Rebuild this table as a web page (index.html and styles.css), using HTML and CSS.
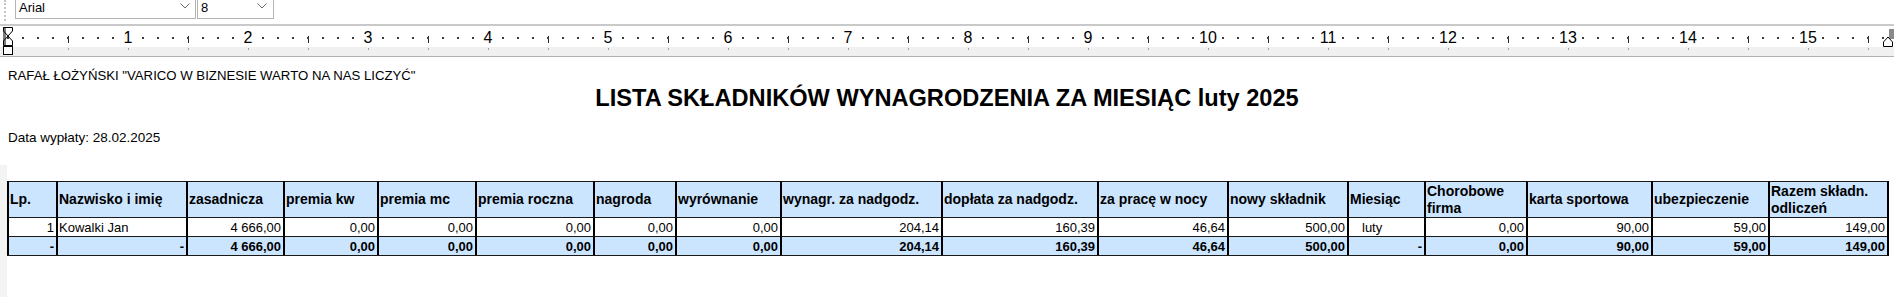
FILE: index.html
```html
<!DOCTYPE html>
<html lang="pl">
<head>
<meta charset="utf-8">
<title>Lista składników wynagrodzenia</title>
<link rel="stylesheet" href="styles.css">
</head>
<body>
<div class="toolbar">
  <div class="grip"></div>
  <div class="combo combo-font"><span>Arial</span><svg class="chev" viewBox="0 0 10 6"><polyline points="0.5,0.5 5,5 9.5,0.5"/></svg></div>
  <div class="combo combo-size"><span>8</span><svg class="chev" viewBox="0 0 10 6"><polyline points="0.5,0.5 5,5 9.5,0.5"/></svg></div>
</div>
<div class="ruler">
  <svg class="indent-left" width="12" height="30" viewBox="0 0 12 30">
    <rect x="1" y="1" width="3" height="18" fill="#7c7c7c"/>
    <path d="M1.5 1.5 H10.5 V5 L6 10 L1.5 5 Z" fill="none" stroke="#000"/>
    <path d="M6 10 L10.5 15 V19.5 H1.5 V15 Z" fill="none" stroke="#000"/>
    <rect x="1.5" y="20.5" width="9" height="8" fill="#fff" stroke="#000"/>
  </svg>
  <div class="ruler-nums">
    <span><i>1</i></span><span><i>2</i></span><span><i>3</i></span><span><i>4</i></span><span><i>5</i></span><span><i>6</i></span><span><i>7</i></span><span><i>8</i></span><span><i>9</i></span><span><i>10</i></span><span><i>11</i></span><span><i>12</i></span><span><i>13</i></span><span><i>14</i></span><span><i>15</i></span>
  </div>
  <svg class="indent-right" width="12" height="30" viewBox="0 0 12 30">
    <rect x="7" y="3" width="5" height="10" fill="#8a8a8a"/>
    <path d="M1.5 20.5 V16 L6 11 L10.5 16 V20.5 Z" fill="#fff" stroke="#000"/>
  </svg>
</div>
<div class="page">
  <p class="company">RAFAŁ ŁOŻYŃSKI "VARICO W BIZNESIE WARTO NA NAS LICZYĆ"</p>
  <h1 class="title">LISTA SKŁADNIKÓW WYNAGRODZENIA ZA MIESIĄC luty 2025</h1>
  <p class="paydate">Data wypłaty: 28.02.2025</p>
  <div class="table-wrap">
    <table class="payroll">
      <colgroup>
        <col style="width:49px"><col style="width:130px"><col style="width:97px"><col style="width:94px"><col style="width:98px"><col style="width:118px"><col style="width:82px"><col style="width:105px"><col style="width:161px"><col style="width:156px"><col style="width:130px"><col style="width:120px"><col style="width:77px"><col style="width:102px"><col style="width:125px"><col style="width:117px"><col style="width:119px">
      </colgroup>
      <thead>
        <tr>
          <th>Lp.</th><th>Nazwisko i imię</th><th>zasadnicza</th><th>premia kw</th><th>premia mc</th><th>premia roczna</th><th>nagroda</th><th>wyrównanie</th><th>wynagr. za nadgodz.</th><th>dopłata za nadgodz.</th><th>za pracę w nocy</th><th>nowy składnik</th><th>Miesiąc</th><th>Chorobowe firma</th><th>karta sportowa</th><th>ubezpieczenie</th><th>Razem składn. odliczeń</th>
        </tr>
      </thead>
      <tbody>
        <tr>
          <td>1</td><td class="name">Kowalki Jan</td><td>4&nbsp;666,00</td><td>0,00</td><td>0,00</td><td>0,00</td><td>0,00</td><td>0,00</td><td>204,14</td><td>160,39</td><td>46,64</td><td>500,00</td><td class="month">luty</td><td>0,00</td><td>90,00</td><td>59,00</td><td>149,00</td>
        </tr>
        <tr class="total">
          <td>-</td><td>-</td><td>4&nbsp;666,00</td><td>0,00</td><td>0,00</td><td>0,00</td><td>0,00</td><td>0,00</td><td>204,14</td><td>160,39</td><td>46,64</td><td>500,00</td><td>-</td><td>0,00</td><td>90,00</td><td>59,00</td><td>149,00</td>
        </tr>
      </tbody>
    </table>
  </div>
</div>
</body>
</html>
```
FILE: styles.css
```css
* { box-sizing: border-box; }
html, body { margin: 0; padding: 0; background: #fff; }
body {
  width: 1894px;
  height: 297px;
  overflow: hidden;
  font-family: "Liberation Sans", Arial, sans-serif;
  color: #000;
}

/* toolbar */
.toolbar {
  height: 26px;
  border-bottom: 2px solid #c9c9c9;
  display: flex;
  align-items: flex-start;
}
.grip {
  width: 2px;
  height: 21px;
  margin-left: 4px;
  border-left: 2px dotted #c4c4c4;
}
.combo {
  height: 24px;
  margin-top: -5px;
  border: 1px solid #b4b4b4;
  background: #fff;
  display: flex;
  align-items: center;
  justify-content: space-between;
  padding: 0 5px 0 3px;
  font-size: 13px;
  line-height: 15px;
}
.combo-font { margin-left: 9px; width: 181px; }
.combo-size { margin-left: 1px; width: 77px; padding-right: 6px; }
.chev { width: 10px; height: 6px; margin-top: -2px; }
.chev polyline { fill: none; stroke: #6d6d6d; stroke-width: 1; }

/* ruler */
.ruler {
  position: relative;
  height: 31px;
  border-bottom: 1px solid #b2b2b2;
  background:
    linear-gradient(to right, #3c3c3c 0 2px, transparent 2px) 7px 11px / 15px 2px repeat-x,
    linear-gradient(to right, #2a2a2a 0 1px, transparent 1px) 68px 10px / 120px 7px repeat-x,
    linear-gradient(to right, #a0a0a0 0 1px, transparent 1px) 8px 22px / 60px 2px repeat-x,
    linear-gradient(#f0f0f0, #f0f0f0) 0 21px / 100% 9px no-repeat,
    #fff;
}
.ruler-nums {
  display: flex;
  padding: 4px 0 0 68px;
  font-family: "Liberation Sans Narrow", "Liberation Sans", sans-serif;
  font-size: 16px;
  line-height: 16px;
}
.ruler-nums span { flex: none; width: 120px; text-align: center; }
.ruler-nums i { font-style: normal; background: #fff; padding: 0 1px; }
.indent-left { position: absolute; left: 2px; top: 0; }
.indent-right { position: absolute; right: 0; top: 0; }

/* page */
.company {
  margin: 11px 0 0;
  padding-left: 8px;
  font-size: 13.2px;
  line-height: 15px;
}
.title {
  margin: 2px 0 0;
  font-size: 23.6px;
  line-height: 27px;
  font-weight: bold;
  text-align: center;
}
.paydate {
  margin: 18px 0 0;
  padding-left: 8px;
  font-size: 13.5px;
  line-height: 15px;
}
.table-wrap {
  margin-top: 20px;
  padding-top: 16px;
  height: 132px;
  border-left: 7px solid #f3f3f3;
}

/* table */
.payroll {
  border-collapse: separate;
  border-spacing: 0;
  table-layout: fixed;
  width: 1882px;
  border-right: 2px solid #000;
  border-bottom: 1px solid #1a1a1a;
}
.payroll th, .payroll td {
  border-left: 2px solid #000;
  border-top: 1px solid #1a1a1a;
  padding: 0 2px 0 1px;
  overflow: hidden;
}
.payroll th {
  height: 36px;
  background: #cce5ff;
  font-size: 14px;
  line-height: 17px;
  font-weight: bold;
  text-align: left;
  vertical-align: middle;
}
.payroll td {
  height: 19px;
  font-size: 13px;
  line-height: 15px;
  text-align: right;
  white-space: nowrap;
  vertical-align: middle;
}
.payroll td.name { text-align: left; }
.payroll td.month { text-align: left; padding-left: 13px; }
.payroll .total td { background: #cce5ff; font-weight: bold; }
```
